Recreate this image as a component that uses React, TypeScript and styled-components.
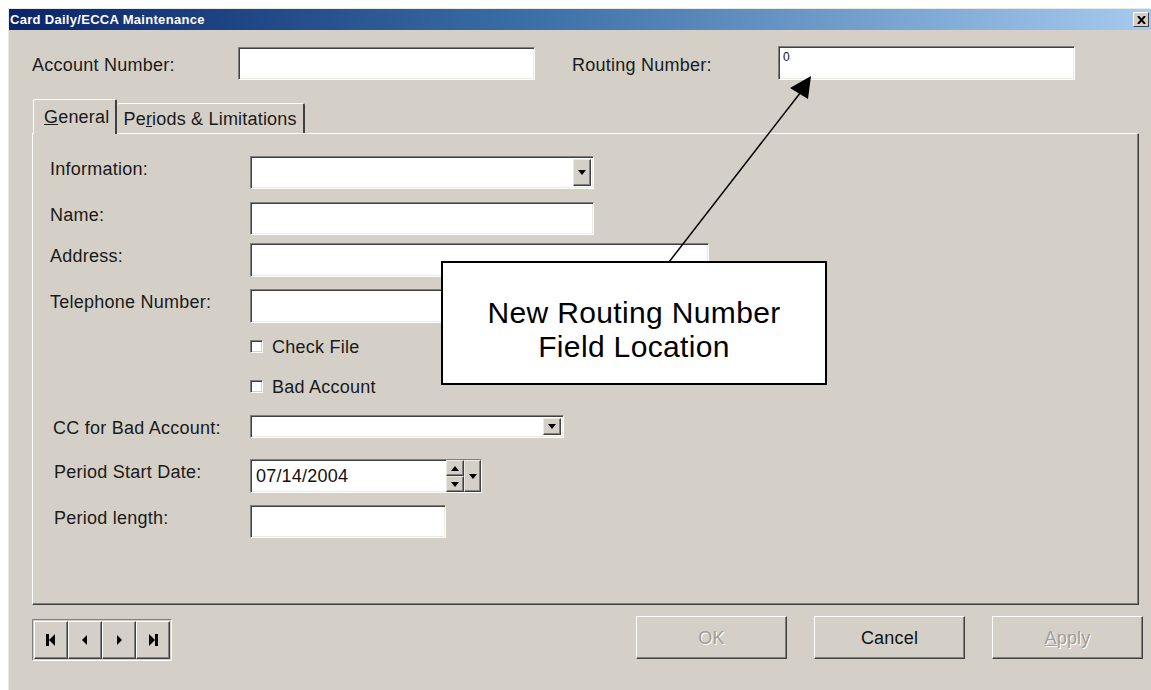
import styled, { createGlobalStyle } from "styled-components";

const GlobalStyle = createGlobalStyle`
  html, body {
    margin: 0;
    padding: 0;
    background: #ffffff;
    overflow: hidden;
  }
  body {
    padding: 8px 0 0 8px;
    font-family: "Liberation Sans", Arial, sans-serif;
  }
`;

const GRAY = "#d4d0c8";

const Window = styled.div`
  position: relative;
  width: 1143px;
  height: 682px;
  background: ${GRAY};
  border-top: 1px solid #ece9e2;
  border-left: 1px solid #ece9e2;
  box-sizing: border-box;
  display: flex;
  flex-direction: column;
`;

const TitleBar = styled.div`
  height: 21px;
  display: flex;
  align-items: center;
  justify-content: space-between;
  padding: 0 2px 0 1px;
  background: linear-gradient(to right, #0a246a 0%, #3a6ea5 45%, #a6caf0 100%);
`;

const Title = styled.span`
  color: #ffffff;
  font-weight: bold;
  font-size: 13px;
  letter-spacing: 0.3px;
`;

const CloseButton = styled.div`
  width: 16px;
  height: 15px;
  background: ${GRAY};
  box-sizing: border-box;
  border: 1px solid;
  border-color: #ffffff #404040 #404040 #ffffff;
  display: flex;
  align-items: center;
  justify-content: center;
`;

const Content = styled.div`
  flex: 1;
  display: flex;
  flex-direction: column;
  padding: 0 0 0 23px;
`;

const TopRow = styled.div`
  display: flex;
  align-items: center;
  margin-top: 16px;
  height: 34px;
  & > span {
    padding-top: 4px;
  }
`;

const Label = styled.span<{ $width?: number; $indent?: number }>`
  font-size: 18px;
  letter-spacing: 0.25px;
  line-height: 20px;
  color: #1a1a1a;
  box-sizing: border-box;
  width: ${(p) => (p.$width ? `${p.$width}px` : "auto")};
  padding-left: ${(p) => p.$indent || 0}px;
  flex-shrink: 0;
  white-space: nowrap;
`;

const Sunken = styled.div<{ $w: number; $h: number }>`
  width: ${(p) => p.$w}px;
  height: ${(p) => p.$h}px;
  box-sizing: border-box;
  background: #ffffff;
  border: 1px solid;
  border-color: #808080 #ffffff #ffffff #808080;
  box-shadow: inset 1px 1px 0 #404040, inset -1px -1px 0 #ece9e2;
  display: flex;
  align-items: stretch;
  flex-shrink: 0;
`;

const FieldText = styled.span<{ $small?: boolean }>`
  flex: 1;
  font-size: ${(p) => (p.$small ? "12px" : "18px")};
  letter-spacing: ${(p) => (p.$small ? "0" : "0.2px")};
  line-height: ${(p) => (p.$small ? "16px" : "32px")};
  padding: ${(p) => (p.$small ? "2px 0 0 4px" : "0 0 0 5px")};
  color: #111;
`;

const Raised = styled.div<{ $w: number }>`
  width: ${(p) => p.$w}px;
  background: ${GRAY};
  box-sizing: border-box;
  border: 1px solid;
  border-color: #ece9e2 #404040 #404040 #ece9e2;
  box-shadow: inset -1px -1px 0 #808080;
  display: flex;
  align-items: center;
  justify-content: center;
  flex-shrink: 0;
`;

const SpinStack = styled.div`
  display: flex;
  flex-direction: column;
  width: 18px;
  & > div {
    flex: 1;
  }
`;

const Tabs = styled.div`
  display: flex;
  align-items: flex-end;
  margin-top: 19px;
  margin-left: 1px;
  height: 34px;
`;

const Tab = styled.div<{ $active?: boolean }>`
  position: relative;
  z-index: ${(p) => (p.$active ? 2 : 1)};
  height: ${(p) => (p.$active ? 35 : 30)}px;
  margin-bottom: ${(p) => (p.$active ? -1 : 0)}px;
  box-sizing: border-box;
  padding: ${(p) => (p.$active ? "7px 6px 0 10px" : "5px 6px 0 6px")};
  background: ${GRAY};
  border-top: 1px solid #ffffff;
  border-left: ${(p) => (p.$active ? "1px solid #ffffff" : "none")};
  border-right: 2px solid #404040;
  border-radius: 2px 2px 0 0;
  font-size: 18px;
  letter-spacing: 0.2px;
  line-height: 20px;
  color: #1a1a1a;
`;

const Panel = styled.div`
  width: 1107px;
  height: 472px;
  box-sizing: border-box;
  border: 1px solid;
  border-color: #ffffff #404040 #404040 #ffffff;
  box-shadow: inset -1px -1px 0 #808080;
  padding: 0 0 0 17px;
  display: flex;
  flex-direction: column;
`;

const Row = styled.div<{ $mt: number; $h: number }>`
  display: flex;
  align-items: flex-start;
  margin-top: ${(p) => p.$mt}px;
  height: ${(p) => p.$h}px;
  & > span:first-child {
    padding-top: 3px;
  }
`;

const CheckRow = styled.div<{ $mt: number }>`
  display: flex;
  align-items: center;
  gap: 9px;
  margin-top: ${(p) => p.$mt}px;
  margin-left: 200px;
  height: 20px;
  & > span {
    padding-top: 2px;
  }
`;

const CheckBox = styled.div`
  width: 13px;
  height: 13px;
  box-sizing: border-box;
  background: #ffffff;
  border: 1px solid;
  border-color: #808080 #ffffff #ffffff #808080;
  box-shadow: inset 1px 1px 0 #404040, inset -1px -1px 0 ${GRAY};
`;

const Footer = styled.div`
  display: flex;
  align-items: flex-start;
  margin-top: 11px;
  padding-right: 8px;
`;

const NavGroup = styled.div`
  display: flex;
  margin-top: 3px;
  padding: 1px;
  border: 1px solid;
  border-color: #808080 #ffffff #ffffff #808080;
  height: 42px;
  box-sizing: border-box;
`;

const NavButton = styled.div`
  width: 34px;
  height: 100%;
  box-sizing: border-box;
  background: ${GRAY};
  border: 1px solid;
  border-color: #ffffff #404040 #404040 #ffffff;
  box-shadow: inset -1px -1px 0 #808080;
  display: flex;
  align-items: center;
  justify-content: center;
`;

const Spacer = styled.div`
  flex: 1;
`;

const DialogButton = styled.div<{ $disabled?: boolean }>`
  width: 151px;
  height: 43px;
  margin-left: 27px;
  box-sizing: border-box;
  background: ${GRAY};
  border: 1px solid;
  border-color: #ffffff #404040 #404040 #ffffff;
  box-shadow: inset -1px -1px 0 #808080;
  display: flex;
  align-items: center;
  justify-content: center;
  padding-top: 1px;
  font-size: 18px;
  letter-spacing: 0.2px;
  color: ${(p) => (p.$disabled ? "#a09d97" : "#111")};
  text-shadow: ${(p) => (p.$disabled ? "1px 1px 0 #ffffff" : "none")};
`;

const Callout = styled.div`
  position: absolute;
  left: 432px;
  top: 252px;
  width: 386px;
  height: 124px;
  box-sizing: border-box;
  background: #ffffff;
  border: 2px solid #000000;
  display: flex;
  align-items: center;
  justify-content: center;
  text-align: center;
  font-size: 30px;
  letter-spacing: 0.35px;
  line-height: 34px;
  color: #000000;
  padding-top: 14px;
  z-index: 5;
`;

const ArrowLayer = styled.svg`
  position: absolute;
  left: 0;
  top: 0;
  pointer-events: none;
  z-index: 4;
`;

const Arrow = ({ dir, bar }: { dir: "left" | "right"; bar?: boolean }) => (
  <svg width="14" height="14" viewBox="0 0 14 14">
    {dir === "left" ? (
      <>
        {bar && <rect x="2" y="1" width="3" height="12" fill="#000" />}
        <polygon points={bar ? "5,7 11,1 11,13" : "4,7 9,2 9,12"} fill="#000" />
      </>
    ) : (
      <>
        <polygon points={bar ? "3,1 9,7 3,13" : "5,2 10,7 5,12"} fill="#000" />
        {bar && <rect x="9" y="1" width="3" height="12" fill="#000" />}
      </>
    )}
  </svg>
);

const Tri = ({ up }: { up?: boolean }) => (
  <svg width="8" height="5" viewBox="0 0 8 5">
    <polygon points={up ? "0,5 8,5 4,0" : "0,0 8,0 4,5"} fill="#000" />
  </svg>
);

const Combo = ({ w, h }: { w: number; h: number }) => (
  <Sunken $w={w} $h={h}>
    <FieldText />
    <Raised $w={18} style={{ margin: "2px 2px 2px 0" }}>
      <Tri />
    </Raised>
  </Sunken>
);

const U = styled.span`
  text-decoration: underline;
`;

export default function App() {
  return (
    <>
      <GlobalStyle />
      <Window>
        <TitleBar>
          <Title>Card Daily/ECCA Maintenance</Title>
          <CloseButton>
            <svg width="9" height="8" viewBox="0 0 9 8">
              <path d="M1 0 L8 8 M8 0 L1 8" stroke="#000" strokeWidth="2" />
            </svg>
          </CloseButton>
        </TitleBar>
        <Content>
          <TopRow>
            <Label $width={206}>Account Number:</Label>
            <Sunken $w={297} $h={33} />
            <Label $width={243} $indent={37}>
              Routing Number:
            </Label>
            <Sunken $w={297} $h={34}>
              <FieldText $small>0</FieldText>
            </Sunken>
          </TopRow>

          <Tabs>
            <Tab $active>
              <U>G</U>eneral
            </Tab>
            <Tab>
              Pe<U>r</U>iods &amp; Limitations
            </Tab>
          </Tabs>
          <Panel>
            <Row $mt={22} $h={33}>
              <Label $width={200}>Information:</Label>
              <Combo w={344} h={33} />
            </Row>
            <Row $mt={13} $h={33}>
              <Label $width={200}>Name:</Label>
              <Sunken $w={344} $h={33} />
            </Row>
            <Row $mt={8} $h={34}>
              <Label $width={200}>Address:</Label>
              <Sunken $w={459} $h={34} />
            </Row>
            <Row $mt={12} $h={34}>
              <Label $width={200}>Telephone Number:</Label>
              <Sunken $w={344} $h={34} />
            </Row>
            <CheckRow $mt={13}>
              <CheckBox />
              <Label>Check File</Label>
            </CheckRow>
            <CheckRow $mt={20}>
              <CheckBox />
              <Label>Bad Account</Label>
            </CheckRow>
            <Row $mt={19} $h={23}>
              <Label $width={200} $indent={3}>
                CC for Bad Account:
              </Label>
              <Combo w={314} h={23} />
            </Row>
            <Row $mt={21} $h={34}>
              <Label $width={200} $indent={4}>
                Period Start Date:
              </Label>
              <Sunken $w={232} $h={34}>
                <FieldText>07/14/2004</FieldText>
                <SpinStack>
                  <Raised $w={18}>
                    <Tri up />
                  </Raised>
                  <Raised $w={18}>
                    <Tri />
                  </Raised>
                </SpinStack>
                <Raised $w={17}>
                  <Tri />
                </Raised>
              </Sunken>
            </Row>
            <Row $mt={12} $h={33}>
              <Label $width={200} $indent={4}>
                Period length:
              </Label>
              <Sunken $w={196} $h={33} />
            </Row>
          </Panel>

          <Footer>
            <NavGroup>
              <NavButton>
                <Arrow dir="left" bar />
              </NavButton>
              <NavButton>
                <Arrow dir="left" />
              </NavButton>
              <NavButton>
                <Arrow dir="right" />
              </NavButton>
              <NavButton>
                <Arrow dir="right" bar />
              </NavButton>
            </NavGroup>
            <Spacer />
            <DialogButton $disabled>OK</DialogButton>
            <DialogButton>Cancel</DialogButton>
            <DialogButton $disabled>
              <U>A</U>pply
            </DialogButton>
          </Footer>
        </Content>

        <Callout>
          New Routing Number
          <br />
          Field Location
        </Callout>
        <ArrowLayer width="1143" height="682">
          <line x1="660" y1="253" x2="795" y2="79" stroke="#000" strokeWidth="1.5" />
          <polygon points="802,67 781,79 799,90" fill="#000" />
        </ArrowLayer>
      </Window>
    </>
  );
}
